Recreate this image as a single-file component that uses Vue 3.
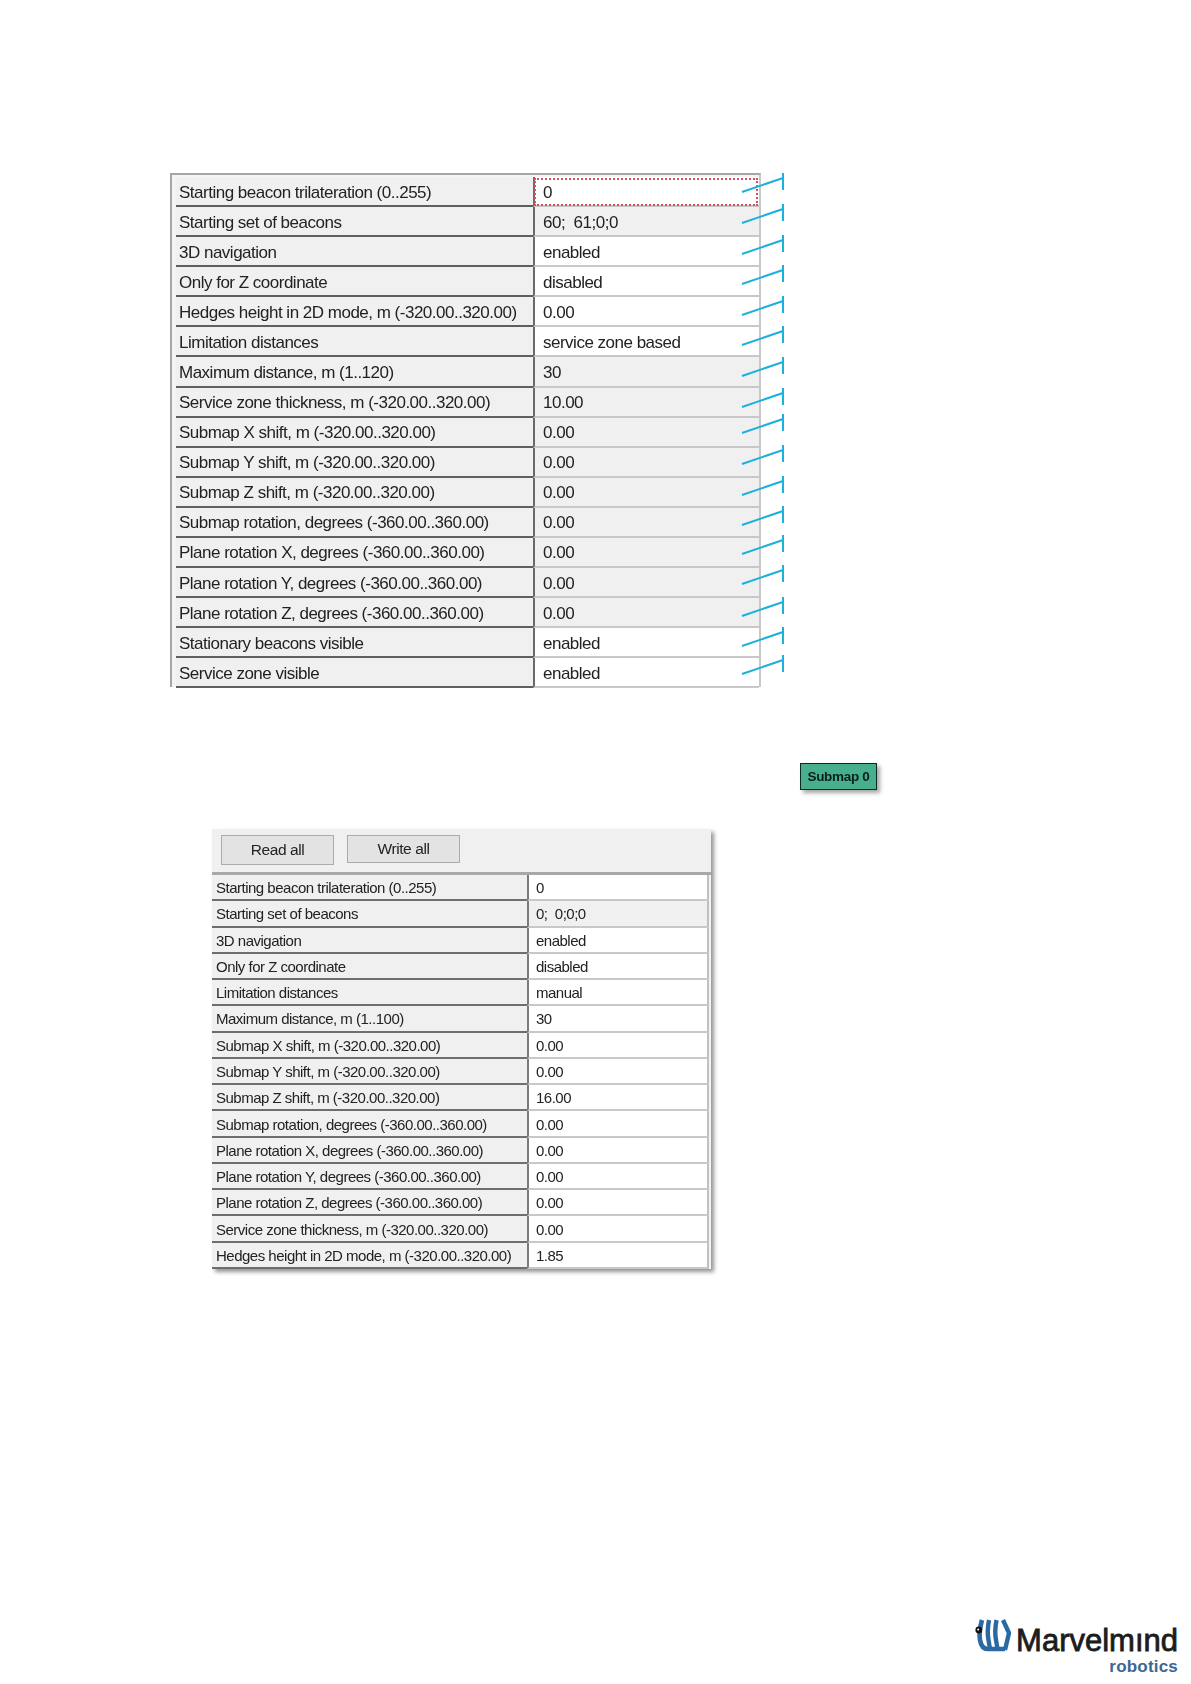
<script setup>
const rowsA = [
  ['Starting beacon trilateration (0..255)', '0', 'focus'],
  ['Starting set of beacons', '60;  61;0;0', 'gray'],
  ['3D navigation', 'enabled', ''],
  ['Only for Z coordinate', 'disabled', ''],
  ['Hedges height in 2D mode, m (-320.00..320.00)', '0.00', ''],
  ['Limitation distances', 'service zone based', ''],
  ['Maximum distance, m (1..120)', '30', 'gray'],
  ['Service zone thickness, m (-320.00..320.00)', '10.00', 'gray'],
  ['Submap X shift, m (-320.00..320.00)', '0.00', 'gray'],
  ['Submap Y shift, m (-320.00..320.00)', '0.00', 'gray'],
  ['Submap Z shift, m (-320.00..320.00)', '0.00', 'gray'],
  ['Submap rotation, degrees (-360.00..360.00)', '0.00', 'gray'],
  ['Plane rotation X, degrees (-360.00..360.00)', '0.00', 'gray'],
  ['Plane rotation Y, degrees (-360.00..360.00)', '0.00', 'gray'],
  ['Plane rotation Z, degrees (-360.00..360.00)', '0.00', 'gray'],
  ['Stationary beacons visible', 'enabled', ''],
  ['Service zone visible', 'enabled', ''],
]
const rowsB = [
  ['Starting beacon trilateration (0..255)', '0', ''],
  ['Starting set of beacons', '0;  0;0;0', 'gray'],
  ['3D navigation', 'enabled', ''],
  ['Only for Z coordinate', 'disabled', ''],
  ['Limitation distances', 'manual', ''],
  ['Maximum distance, m (1..100)', '30', ''],
  ['Submap X shift, m (-320.00..320.00)', '0.00', ''],
  ['Submap Y shift, m (-320.00..320.00)', '0.00', ''],
  ['Submap Z shift, m (-320.00..320.00)', '16.00', ''],
  ['Submap rotation, degrees (-360.00..360.00)', '0.00', ''],
  ['Plane rotation X, degrees (-360.00..360.00)', '0.00', ''],
  ['Plane rotation Y, degrees (-360.00..360.00)', '0.00', ''],
  ['Plane rotation Z, degrees (-360.00..360.00)', '0.00', ''],
  ['Service zone thickness, m (-320.00..320.00)', '0.00', ''],
  ['Hedges height in 2D mode, m (-320.00..320.00)', '1.85', ''],
]
// Top of each callout's vertical tick, relative to the page
const tickTops = [173, 204, 235, 265, 296, 326, 357, 388, 414, 445, 476, 506, 535, 565, 597, 627, 655]
const ticks = tickTops.map((t) => t - 173)
</script>

<template>
  <div class="page">
    <div class="shotA">
      <div class="gridA">
        <template v-for="(r, i) in rowsA" :key="i">
          <div class="nameA">{{ r[0] }}</div>
          <div class="valA" :class="r[2]">{{ r[1] }}</div>
        </template>
      </div>
      <svg class="callouts" width="60" height="520" viewBox="0 0 60 520">
        <g v-for="(t, i) in ticks" :key="i" fill="none" stroke="#1cb0dc">
          <path :d="`M11 ${t + 19}L52 ${t + 5}`" stroke-width="2" />
          <path :d="`M52 ${t}V${t + 17}`" stroke-width="2" />
        </g>
      </svg>
    </div>

    <div class="badgeRow"><div class="badge">Submap 0</div></div>

    <div class="shotB">
      <div class="toolbar">
        <div class="btn">Read all</div>
        <div class="btn write">Write all</div>
      </div>
      <div class="gridB">
        <template v-for="(r, i) in rowsB" :key="i">
          <div class="nameB">{{ r[0] }}</div>
          <div class="valB" :class="r[2]">{{ r[1] }}</div>
        </template>
      </div>
    </div>

    <div class="logoRow">
      <div class="logo">
        <svg class="mark" width="37" height="35" viewBox="0 0 37 35">
          <g fill="none" stroke="#2a6aa4" stroke-linejoin="round">
            <path d="M7 2C5 9 4 16 5 22C6 28 9 31 13 31H30" stroke-width="4.6" />
            <path d="M14 2C12.5 10 12.5 17 13.5 22L15 31" stroke-width="4.4" />
            <path d="M21.5 2C20 10 20 17 21 22L22.5 31" stroke-width="4.4" />
            <path d="M28 2L34 15L30 32" stroke-width="4.4" />
          </g>
          <circle cx="3.8" cy="12" r="3.4" fill="#111" />
          <circle cx="3.2" cy="11.4" r="1" fill="#fff" />
        </svg>
        <div class="wordmark">
          <div class="brand">Marvelmınd</div>
          <div class="sub">robotics</div>
        </div>
      </div>
    </div>
  </div>
</template>

<style scoped>
.page {
  width: 1191px;
  height: 1684px;
  background: #fff;
  padding-top: 173px;
  box-sizing: border-box;
  font-family: "Liberation Sans", Arial, sans-serif;
  color: #222;
  overflow: hidden;
}
.shotA {
  position: relative;
  width: 591px;
  margin-left: 170px;
  height: 514px;
  box-sizing: border-box;
  padding: 2px 2px 0 4px;
  border-top: 2px solid #a6a6a6;
  border-left: 2px solid #a6a6a6;
  border-right: 2px solid #c8c8c8;
  background: #f4f4f4;
}
.gridA {
  display: grid;
  grid-template-columns: 357px 226px;
  grid-auto-rows: 30.08px;
  filter: blur(0.4px);
}
.nameA,
.valA {
  display: flex;
  align-items: center;
  box-sizing: border-box;
  font-size: 17px;
  letter-spacing: -0.5px;
  white-space: pre;
}
.nameA {
  background: #f0f0f0;
  border-bottom: 2px solid #5f5f5f;
  padding: 3px 0 0 3px;
}
.valA {
  background: #fff;
  border-bottom: 2px solid #c8c8c8;
  border-left: 2px solid #6a6a6a;
  padding: 3px 0 0 8px;
}
.valA.gray {
  background: #f0f0f0;
}
.valA.focus {
  outline: 2px dotted #d8505f;
  outline-offset: -3px;
}
.callouts {
  position: absolute;
  left: 559px;
  top: -2px;
}
.badgeRow {
  display: flex;
  margin-top: 76px;
  padding-left: 800px;
}
.badge {
  width: 77px;
  height: 27px;
  box-sizing: border-box;
  border: 1px solid #0c2a22;
  background: #47ae8e;
  color: #0b1f1a;
  font-size: 13.5px;
  font-weight: 700;
  letter-spacing: -0.3px;
  display: flex;
  align-items: center;
  justify-content: center;
  box-shadow: 3px 3px 4px rgba(0, 0, 0, 0.35);
  filter: blur(0.25px);
}
.shotB {
  width: 499px;
  margin: 39px 0 0 212px;
  background: #f0f0f0;
  box-shadow: 3px 3px 4px rgba(0, 0, 0, 0.42);
}
.toolbar {
  display: flex;
  gap: 13px;
  height: 46px;
  box-sizing: border-box;
  padding: 6px 0 0 9px;
  border-bottom: 3px solid #a8a8a8;
}
.btn {
  width: 113px;
  height: 30px;
  box-sizing: border-box;
  border: 1px solid #ababab;
  background: #e3e3e3;
  display: flex;
  align-items: center;
  justify-content: center;
  font-size: 15.5px;
  letter-spacing: -0.4px;
  filter: blur(0.3px);
}
.btn.write {
  height: 28px;
}
.gridB {
  display: grid;
  grid-template-columns: 315px 182px;
  grid-auto-rows: 26.27px;
  border-right: 2px solid #f4f4f4;
  filter: blur(0.35px);
}
.nameB,
.valB {
  display: flex;
  align-items: center;
  box-sizing: border-box;
  font-size: 15px;
  letter-spacing: -0.5px;
  white-space: pre;
}
.nameB {
  background: #f0f0f0;
  border-bottom: 2px solid #6e6e6e;
  padding: 1px 0 0 4px;
}
.valB {
  background: #fff;
  border-bottom: 2px solid #c8c8c8;
  border-left: 2px solid #7a7a7a;
  border-right: 2px solid #c0c0c0;
  padding: 1px 0 0 7px;
}
.valB.gray {
  background: #f0f0f0;
}
.logoRow {
  display: flex;
  justify-content: flex-end;
  margin-top: 349px;
  padding-right: 13px;
}
.logo {
  display: flex;
  align-items: flex-start;
  gap: 4px;
}
.mark {
  flex: none;
}
.wordmark {
  display: flex;
  flex-direction: column;
  align-items: flex-end;
  padding-top: 8px;
}
.brand {
  font-size: 31px;
  line-height: 30px;
  color: #1c1c1c;
  letter-spacing: 0;
  -webkit-text-stroke: 0.8px #1c1c1c;
}
.sub {
  font-size: 17px;
  font-weight: 700;
  line-height: 21px;
  color: #3b6795;
  letter-spacing: 0.2px;
}
</style>
